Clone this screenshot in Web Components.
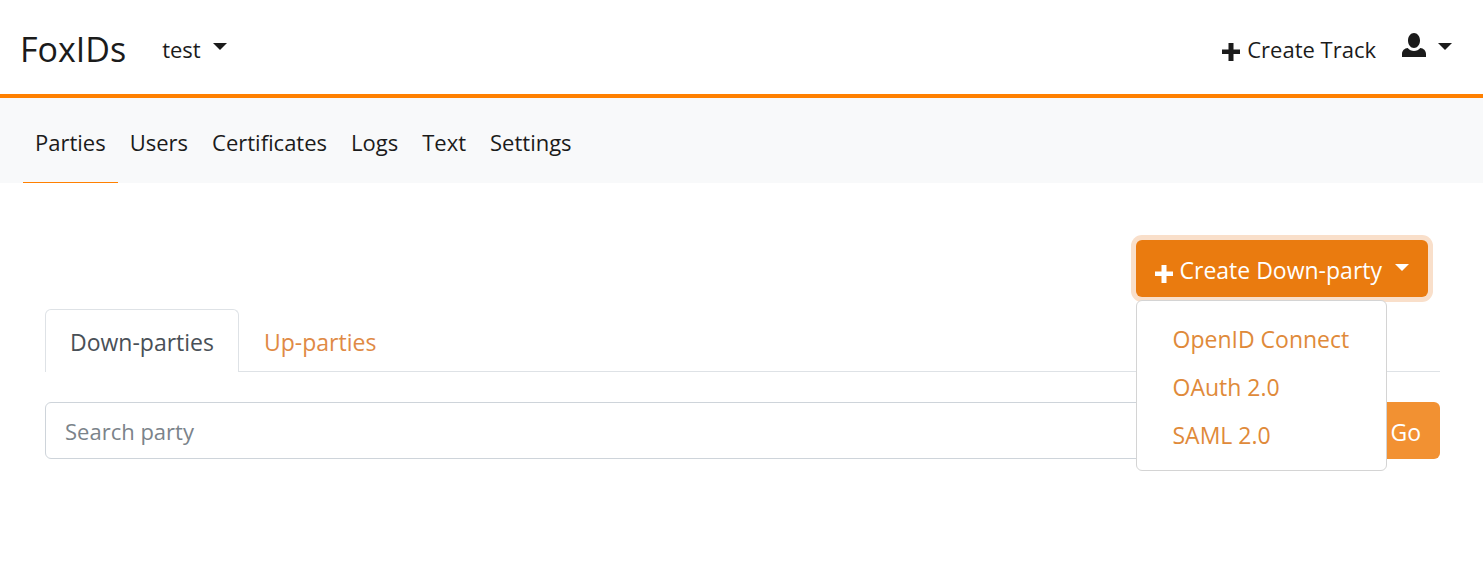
<!DOCTYPE html>
<html lang="en">
<head>
<meta charset="utf-8">
<title>FoxIDs</title>
<style>
body { margin: 0; min-height: 100vh; background: #fff; color: #1b1b1b; font: 400 23px/36px "Open Sans", "Noto Sans", sans-serif; }
</style>
</head>
<body>
<fox-header></fox-header>
<fox-nav>
  <fox-nav-link active>Parties</fox-nav-link>
  <fox-nav-link>Users</fox-nav-link>
  <fox-nav-link>Certificates</fox-nav-link>
  <fox-nav-link>Logs</fox-nav-link>
  <fox-nav-link>Text</fox-nav-link>
  <fox-nav-link>Settings</fox-nav-link>
</fox-nav>
<fox-parties></fox-parties>
<script>
function define(name, html) {
  customElements.define(name, class extends HTMLElement {
    constructor() {
      super();
      const t = document.createElement('template');
      t.innerHTML = html;
      this.attachShadow({ mode: 'open' }).append(t.content.cloneNode(true));
    }
  });
}

define('fox-caret', `
<style>
:host { display: block; flex: none; border: 7px solid transparent; border-top-color: currentColor; border-bottom: 0; margin-bottom: 5px; }
</style>`);

define('fox-plus', `
<style>
:host { display: block; flex: none; width: 18px; height: 18px; margin-top: 7px; }
svg { display: block; }
</style>
<svg width="18" height="18" viewBox="0 0 18 18" fill="currentColor" aria-hidden="true"><path d="M6.500 0h5v6.500H18v4.500h-6.500V18h-5v-7H0V6.500h6.500z"/></svg>`);

define('fox-person', `
<style>
:host { display: block; flex: none; width: 24px; height: 24px; margin-bottom: 8px; }
svg { display: block; }
</style>
<svg width="24" height="24" viewBox="0 0 24 24" fill="currentColor" aria-hidden="true"><path d="M12 0C8.700 0 6 3.400 6 7.500S8.700 15 12 15s6-3.400 6-7.500S15.300 0 12 0zM5.700 15C2.500 15.200 0 17.800 0 21v3h24v-3c0-3.200-2.500-5.800-5.700-6-1.600 1.900-3.800 3-6.300 3s-4.700-1.100-6.300-3z"/></svg>`);

define('fox-header', `
<style>
:host { display: flex; align-items: center; box-sizing: border-box; min-height: 98px; padding: 3px 31px 0 20px; border-bottom: 4px solid #ff8000; font-size: 22px; }
a { color: inherit; text-decoration: none; }
.brand { font-size: 34px; line-height: 48px; margin-right: 36px; }
button { all: unset; display: flex; align-items: center; gap: 12px; cursor: pointer; }
.create { margin-left: auto; margin-right: 26px; gap: 7px; }
</style>
<a class="brand" href="#">FoxIDs</a>
<button type="button">test<fox-caret></fox-caret></button>
<button type="button" class="create"><fox-plus></fox-plus>Create Track</button>
<button type="button" aria-label="Account"><fox-person></fox-person><fox-caret></fox-caret></button>`);

define('fox-nav', `
<style>
:host { display: block; background: #f8f9fa; font-size: 22px; }
nav { display: flex; padding: 0 23px; }
</style>
<nav><slot></slot></nav>`);

define('fox-nav-link', `
<style>
:host { display: block; }
a { display: block; padding: 26px 12px 22px; border-bottom: 1px solid transparent; color: inherit; text-decoration: none; }
:host([active]) a { border-color: #ff8000; }
</style>
<a href="#"><slot></slot></a>`);

define('fox-create-menu', `
<style>
:host { display: block; position: relative; }
button { display: flex; align-items: center; gap: 7px; border: 0; border-radius: 6px; margin: 0; padding: 12px 19px 9px; background: #ea7b0f; box-shadow: 0 0 0 5px #f9dfca; color: #fff; font: inherit; cursor: pointer; }
fox-caret { margin-left: 6px; }
ul { position: absolute; z-index: 1; top: 100%; left: 0; box-sizing: border-box; width: 251px; margin: 3px 0 0; padding: 14px 0 11px; list-style: none; background: #fff; border: 1px solid #d4d4d4; border-radius: 6px; }
a { display: block; padding: 6px 36px; color: #df8a3a; text-decoration: none; white-space: nowrap; }
</style>
<button type="button" aria-expanded="true"><fox-plus></fox-plus>Create Down-party<fox-caret></fox-caret></button>
<ul>
  <li><a href="#">OpenID Connect</a></li>
  <li><a href="#">OAuth 2.0</a></li>
  <li><a href="#">SAML 2.0</a></li>
</ul>`);

define('fox-tabs', `
<style>
nav { display: flex; border-bottom: 1px solid #dee2e6; }
:host { display: block; }
a { padding: 14px 24px 11px; border: 1px solid transparent; border-bottom: 0; border-radius: 6px 6px 0 0; color: #df8a45; text-decoration: none; }
a[aria-current] { margin-bottom: -1px; padding-bottom: 12px; background: #fff; border-color: #dee2e6; color: #495057; }
</style>
<nav><a href="#" aria-current="page">Down-parties</a><a href="#">Up-parties</a></nav>`);

define('fox-search', `
<style>
:host { display: block; }
form { display: flex; }
input { flex: 1; min-width: 0; box-sizing: border-box; height: 57px; margin: 0; padding: 1px 19px 0; border: 1px solid #ced4da; border-radius: 6px 0 0 6px; background: #fff; color: #495057; font: inherit; font-size: 22px; outline: 0; }
input::placeholder { color: #7b838a; opacity: 1; }
button { margin: 0; padding: 3px 19px 0; border: 0; border-radius: 0 6px 6px 0; background: #f29132; color: #fff; font: inherit; }
</style>
<form><input type="text" placeholder="Search party" aria-label="Search party"><button type="button">Go</button></form>`);

define('fox-parties', `
<style>
:host { display: block; padding: 57px 43px 30px 45px; }
.actions { display: flex; justify-content: flex-end; margin: 0 12px 12px 0; }
fox-search { margin-top: 30px; }
</style>
<div class="actions"><fox-create-menu></fox-create-menu></div>
<fox-tabs></fox-tabs>
<fox-search></fox-search>`);
</script>
</body>
</html>
